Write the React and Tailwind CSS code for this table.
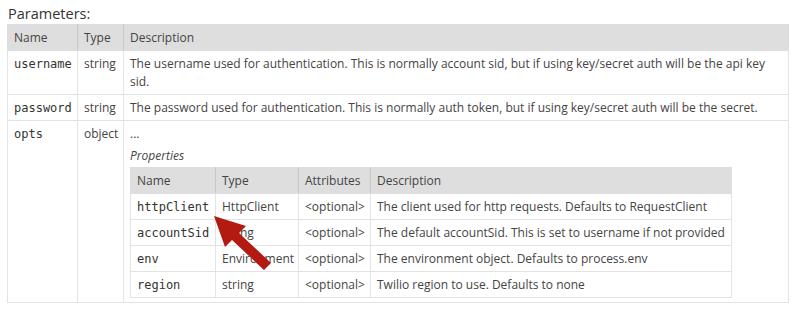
import React from 'react';

const params = [
  {
    name: 'username',
    type: 'string',
    desc: 'The username used for authentication. This is normally account sid, but if using key/secret auth will be the api key sid.',
  },
  {
    name: 'password',
    type: 'string',
    desc: 'The password used for authentication. This is normally auth token, but if using key/secret auth will be the secret.',
  },
];

const props = [
  { name: 'httpClient', type: 'HttpClient', desc: 'The client used for http requests. Defaults to RequestClient' },
  { name: 'accountSid', type: 'string', desc: 'The default accountSid. This is set to username if not provided' },
  { name: 'env', type: 'Environment', desc: 'The environment object. Defaults to process.env' },
  { name: 'region', type: 'string', desc: 'Twilio region to use. Defaults to none' },
];

const mono = "inline-block align-top leading-[18px] font-['DejaVu_Sans_Mono',monospace] text-[12px] text-[#333]";
const th = 'bg-[#dedede] border-x border-x-[#c9c9c9] border-y border-y-[#dedede] px-[6px] pt-[4px] pb-[3px] text-left font-normal';
const td = 'border border-[#e3e3e3] px-[6px] pt-[4px] pb-[3px] align-top';

const App = () => {
  return (
    <div className="relative w-[800px] h-[310px] bg-white font-['Open_Sans',sans-serif] text-[12px] leading-[18px] text-[#444] overflow-hidden">
      <div className="pl-[8px] pt-[4px]">
        <h4 className="text-[14.5px] leading-[20px] text-[#333]">Parameters:</h4>
      </div>

      <div className="pl-[7px]">
        <table className="table-fixed border-collapse w-[782px] border border-[#e3e3e3]">
          <thead>
            <tr>
              <th className={`${th} w-[70px] border-l-[#dedede]`}>Name</th>
              <th className={`${th} w-[46px]`}>Type</th>
              <th className={`${th} border-r-[#dedede]`}>Description</th>
            </tr>
          </thead>
          <tbody>
            {params.map((p) => (
              <tr key={p.name}>
                <td className={td}>
                  <span className={mono}>{p.name}</span>
                </td>
                <td className={td}>{p.type}</td>
                <td className={td}>{p.desc}</td>
              </tr>
            ))}
            <tr>
              <td className={td}>
                <span className={mono}>opts</span>
              </td>
              <td className={td}>object</td>
              <td className={`${td} pb-[4px]`}>
                <p>...</p>
                <h5 className="italic mt-[4px] text-[#444]">Properties</h5>
                <table className="table-fixed border-collapse w-[602px] mt-[2px] border border-[#e3e3e3]">
                  <thead>
                    <tr>
                      <th className={`${th} w-[85px] border-l-[#dedede]`}>Name</th>
                      <th className={`${th} w-[83px]`}>Type</th>
                      <th className={`${th} w-[72px]`}>Attributes</th>
                      <th className={`${th} border-r-[#dedede]`}>Description</th>
                    </tr>
                  </thead>
                  <tbody>
                    {props.map((p) => (
                      <tr key={p.name}>
                        <td className={td}>
                          <span className={mono}>{p.name}</span>
                        </td>
                        <td className={`${td} whitespace-nowrap`}>{p.type}</td>
                        <td className={`${td} whitespace-nowrap`}>&lt;optional&gt;</td>
                        <td className={`${td} whitespace-nowrap`}>{p.desc}</td>
                      </tr>
                    ))}
                  </tbody>
                </table>
              </td>
            </tr>
          </tbody>
        </table>
      </div>

      {/* annotation arrow */}
      <svg className="absolute top-0 left-0 pointer-events-none" width="800" height="310" viewBox="0 0 800 310">
        <polygon
          points="214,216 246,226 239,233 271,263 264,270 232,240 225,247"
          fill="#b31b12"
        />
      </svg>
    </div>
  );
};

export default App;
